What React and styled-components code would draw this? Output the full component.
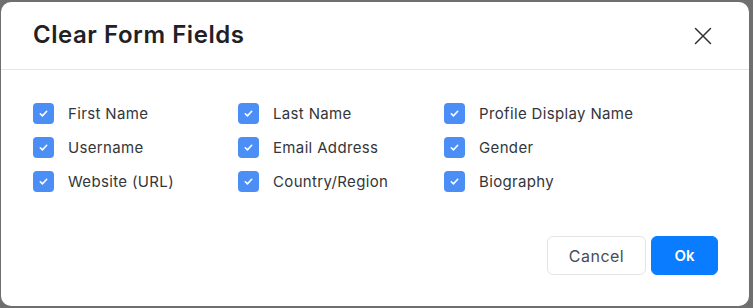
import styled, { createGlobalStyle } from 'styled-components';

const GlobalStyle = createGlobalStyle`
  html, body {
    margin: 0;
    padding: 0;
    background: #6f6f6f;
    font-family: Inter, "Liberation Sans", sans-serif;
  }
`;

const fields = [
  'First Name', 'Last Name', 'Profile Display Name',
  'Username', 'Email Address', 'Gender',
  'Website (URL)', 'Country/Region', 'Biography',
];

function CheckIcon() {
  return (
    <svg width="11" height="11" viewBox="0 0 12 12" fill="none">
      <path d="M2.5 6.3l2.3 2.3 4.7-5" stroke="#fff" strokeWidth="1.7" strokeLinecap="round" strokeLinejoin="round" />
    </svg>
  );
}

function App() {
  return (
    <>
      <GlobalStyle />
      <Modal>
        <Header>
          <Title>Clear Form Fields</Title>
          <CloseButton aria-label="Close">
            <svg width="18" height="18" viewBox="0 0 18 18" fill="none">
              <path d="M1.5 1.5l15 15M16.5 1.5l-15 15" stroke="#2f3338" strokeWidth="1.5" strokeLinecap="round" />
            </svg>
          </CloseButton>
        </Header>

        <FieldGrid>
          {fields.map((f) => (
            <Field key={f}>
              <Box><CheckIcon /></Box>
              <span>{f}</span>
            </Field>
          ))}
        </FieldGrid>

        <Footer>
          <Button>Cancel</Button>
          <Button primary>Ok</Button>
        </Footer>
      </Modal>
    </>
  );
}

export default App;

const Modal = styled.div`
  margin: 2px 4px 2px 1px;
  height: 304px;
  background: #fff;
  border-radius: 10px;
  display: flex;
  flex-direction: column;
  box-sizing: border-box;
`;

const Header = styled.div`
  height: 68px;
  box-sizing: border-box;
  padding: 0 37px 0 32px;
  display: flex;
  align-items: center;
  justify-content: space-between;
  border-bottom: 1px solid #e5e5e5;
`;

const Title = styled.h1`
  margin: 0 0 2px;
  font-size: 24px;
  font-weight: 600;
  color: #1f2126;
  letter-spacing: 0.55px;
`;

const CloseButton = styled.button`
  background: transparent;
  border: none;
  padding: 0;
  cursor: pointer;
  display: flex;
  margin-top: 0;
`;

const FieldGrid = styled.div`
  display: grid;
  grid-template-columns: 205px 206px 1fr;
  grid-auto-rows: 34px;
  padding: 26px 32px 0;
`;

const Field = styled.label`
  display: flex;
  align-items: center;
  gap: 14px;
  font-size: 15px;
  letter-spacing: 0.35px;
  color: #33363b;
`;

const Box = styled.span`
  width: 21px;
  height: 21px;
  border-radius: 4px;
  background: #4b8ef5;
  display: flex;
  align-items: center;
  justify-content: center;
  flex-shrink: 0;
`;

const Footer = styled.div`
  margin-top: auto;
  display: flex;
  justify-content: flex-end;
  align-items: center;
  gap: 5px;
  padding: 0 31px 31px 0;
`;

const Button = styled.button`
  height: 39px;
  box-sizing: border-box;
  border-radius: 6px;
  font-family: inherit;
  cursor: pointer;
  border: 1px solid ${(p) => (p.primary ? '#0a7cff' : '#e2e4e8')};
  background: ${(p) => (p.primary ? '#0a7cff' : '#fff')};
  color: ${(p) => (p.primary ? '#fff' : '#474c59')};
  font-size: ${(p) => (p.primary ? '15px' : '16px')};
  font-weight: ${(p) => (p.primary ? 600 : 400)};
  letter-spacing: ${(p) => (p.primary ? '0' : '0.5px')};
  width: ${(p) => (p.primary ? '67px' : '99px')};
`;
